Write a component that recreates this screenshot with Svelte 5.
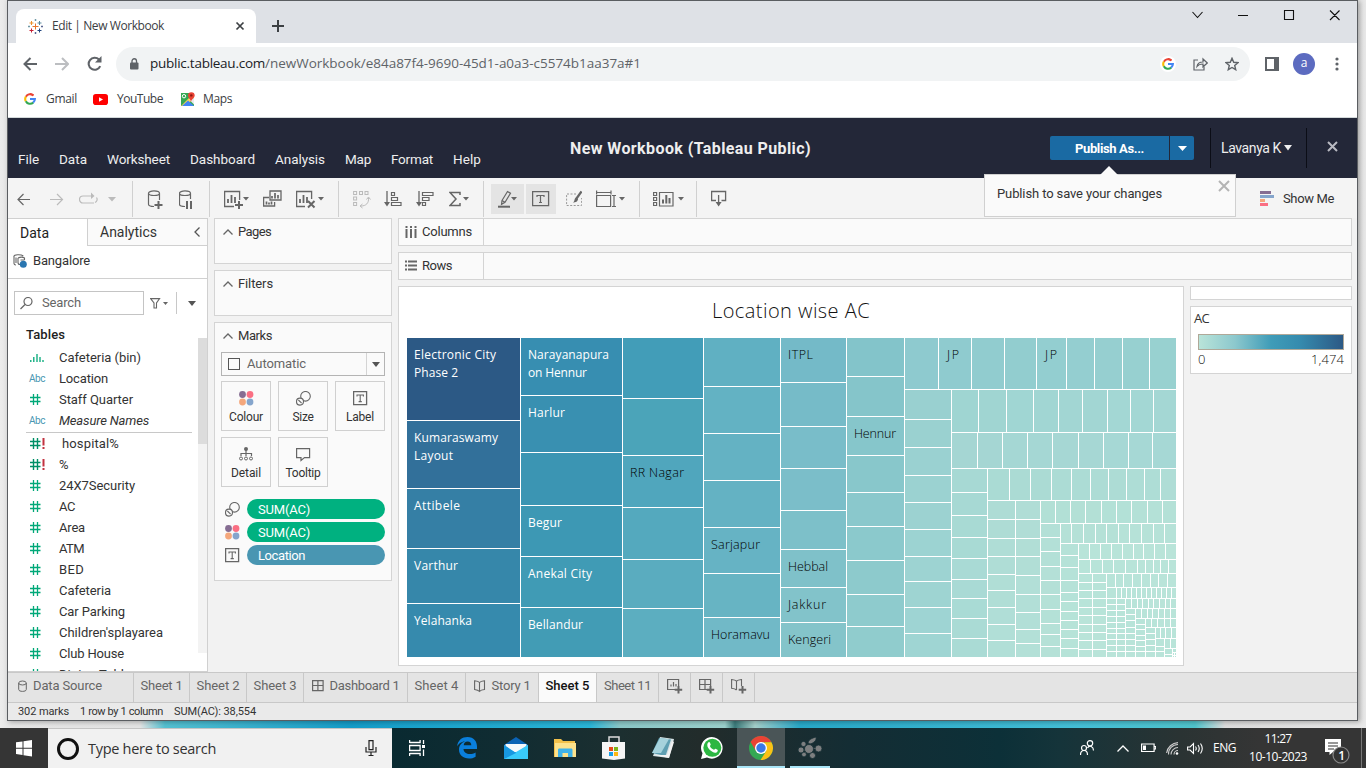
<script>
  // Spreads letters so that a label takes exactly the given width in pixels.
  function fit(node, width) {
    const natural = node.getBoundingClientRect().width;
    const n = node.textContent.length;
    if (natural && n) node.style.letterSpacing = ((width - natural) / n).toFixed(3) + 'px';
  }

  const G = '#666';
  const caret = (x, y = 8) => `<path d="M${x} ${y}h6l-3 3.5z" fill="${G}"/>`;
  const bars = (x, y) => `<path d="M${x} ${y + 4}v4M${x + 3.5} ${y}v8M${x + 7} ${y + 2}v6" stroke="${G}" stroke-width="1.8" fill="none"/>`;
  const s = (d, w = 1.3, c = G) => `<path d="${d}" stroke="${c}" stroke-width="${w}" fill="none"/>`;
  const google = `<path d="M6 1.1a4.9 4.9 0 0 1 3.4 1.3" stroke="#ea4335" stroke-width="2" fill="none"/><path d="M1.9 3.7A4.8 4.8 0 0 1 9.3 2.5" stroke="#ea4335" stroke-width="2.1" fill="none"/><path d="M1.8 8.3a4.8 4.8 0 0 1 .1-4.7" stroke="#fbbc05" stroke-width="2.1" fill="none"/><path d="M9.2 9.6A4.8 4.8 0 0 1 1.8 8.2" stroke="#34a853" stroke-width="2.1" fill="none"/><path d="M6 6h4.9a4.8 4.8 0 0 1-1.8 3.6" stroke="#4285f4" stroke-width="2.1" fill="none"/>`;
  const dots4 = `<circle cx="3.5" cy="3.5" r="3.4" fill="#866d92"/><circle cx="11" cy="3.5" r="3.4" fill="#fa6f83"/><circle cx="3.5" cy="11" r="3.4" fill="#f4a77c"/><circle cx="11" cy="11" r="3.4" fill="#85a5cc"/>`;
  const sizeIcon = `<circle cx="9.5" cy="5.3" r="4.8" stroke="${G}" stroke-width="1.1" fill="#fafafa"/><circle cx="4" cy="10.6" r="3.5" stroke="${G}" stroke-width="1.1" fill="#fafafa"/>` + s('M2.4 9l3.2 3.2', 1.1);
  const tbox = s('M.6 .6h13v13H.6z') + s('M4 5.5V4h6.4v1.5M7.2 4v6.6M5.6 10.6h3.2', 1.1);

  const I = {
    google,
    logo: ['7.5 4.5v6|M4.5 7.5h6|#e8762c', '7.5 0v2|M6.5 1h2|#7099a6', '7.5 13v2|M6.5 14h2|#5b6591', '1 6.5v2|M0 7.5h2|#7099a6', '14 6.5v2|M13 7.5h2|#5b6591', '3.5 2v4|M1.500 4h4|#eb912c', '11.5 2v4|M9.500 4h4|#59879b', '3.5 9.5v4|M1.500 11.500h4|#c72035', '11.500 9.5v4|M9.500 11.500h4|#1f447e'].map((t) => { const p = t.split('|'); return s('M' + p[0] + p[1], 1, p[2]); }).join(''),
    youtube: `<rect y="1" width="15" height="11" rx="2.8" fill="red"/><path d="M6 4.2v4.6l4-2.3z" fill="#fff"/>`,
    maps: `<path d="M1 1h10l3 4v9H1z" fill="#34a853"/><path d="M1 14L12 3l2 2v1L6 14z" fill="#fbd34d"/><path d="M2 14l6-5.5 6 5.5z" fill="#4285f4"/><path d="M9 7.5l5 5V6z" fill="#e8eaed"/><circle cx="4" cy="4.2" r="1.7" stroke="#fff" fill="none"/><path d="M11 10C10.500 7 8 6 8 3.600a3.300 3.300 0 0 1 6.700 0C14.700 6 11.500 7 11 10z" fill="#ea4335"/><circle cx="11.300" cy="3.400" r="1.200" fill="#8c1a11"/>`,
    cBack: s('M14 8H1.500M7.500 2L1.500 8l6 6', 2, '#5f6368'),
    cFwd: s('M0 8h12.500M7 2l6 6-6 6', 2, '#bcbec1'),
    reload: s('M13.200 10.200A6 6 0 1 1 12 3.600', 2.1, '#5f6368') + `<path d="M14.500 0v6.500H8z" fill="#5f6368"/>`,
    lock: `<rect y="4.500" width="8.500" height="7" rx="1" fill="#5f6368"/>` + s('M2 5V3a2.250 2.250 0 0 1 4.500 0v2', 1.3, '#5f6368'),
    share: s('M5 3H1v10h10V9.500', 1.2, '#5f6368') + s('M4 9.500c.5-3.500 3-4.500 6-4.500V2l4.300 4L10 9.800V7C7 7 5.500 7.600 4 9.500z', 1.2, '#5f6368'),
    star: s('M7 1.300l1.700 4 4.300.4-3.300 2.800 1 4.200L7 10.500l-3.700 2.200 1-4.200L1 5.700l4.300-.4z', 1.4, '#5f6368'),
    panel: s('M1 1h12v12H1z', 2, '#5f6368') + `<path d="M9 1h5v12H9z" fill="#5f6368"/>`,
    kebab: `<g fill="#5f6368"><circle cx="2" cy="2" r="1.600"/><circle cx="2" cy="7" r="1.600"/><circle cx="2" cy="12" r="1.600"/></g>`,
    back: s('M13 10.500H1M6.500 5L1 10.500 6.500 16', 1.2),
    fwd: s('M0 10.500h12M7 5l5.500 5.500L7 16', 1.2, '#bbb'),
    loop: s('M15 14H4a3.500 3.500 0 0 1 0-7h10M16 13.500a3.300 3.300 0 0 0 1.500-5', 1.2, '#bbb') + `<path d="M12 3.500L15.500 7 12 10z" fill="#bbb"/>`,
    gcaret: `<path d="M0 8h8l-4 4.500z" fill="#bbb"/>`,
    dbPlus: s('M7 17.500c-3 0-5.500-.8-5.500-2.200V4.500M12.500 4.500V11', 1.2) + `<ellipse cx="7" cy="4.200" rx="5.500" ry="2.300" stroke="${G}" fill="none" stroke-width="1.200"/>` + s('M11.500 12v8M7.500 16h8', 2),
    dbPause: s('M6 17.500c-3 0-5.500-.8-5.500-2.200V4.500M11.500 4.500V10', 1.2) + `<ellipse cx="6" cy="4.200" rx="5.500" ry="2.300" stroke="${G}" fill="none" stroke-width="1.200"/>` + s('M8 12v8M12 12v8', 2),
    newSheet: s('M10 17.500H.6V2.500h15V11') + bars(4, 6) + s('M15 12v8M11 16h8', 2) + caret(19),
    dup: s('M7 2h11v9H7z') + s('M6 8.500H.6V17h11v-4') + `<path d="M9 9.500V7M12 9.500V4M15 9.500V6M3.500 15.500v-3M6 15.500v-2M8.500 15.500v-3" stroke="${G}" stroke-width="1.700"/>`,
    clear: s('M9 17.500H.6V2.500h15V10') + bars(4, 6) + s('M12 12l6.500 6.500M18.500 12L12 18.500', 2) + caret(22),
    swap: `<g stroke="#bbb" fill="none"><rect x=".6" y="2.500" width="3" height="3"/><rect x="6.500" y="2.500" width="3" height="3"/><rect x="12" y="2.500" width="3" height="3"/><rect x=".6" y="8" width="3" height="3"/><rect x=".6" y="13.500" width="3" height="3"/><path d="M8 17c5 0 8-3 7.500-8"/><path d="M13.500 10.500L15.500 8l2 2.500M9.500 15L7 17l2.500 2"/></g>`,
    asc: s('M3 2v14') + `<path d="M0 13h6l-3 4.500z" fill="${G}"/>` + s('M7.500 3.500h3v3h-3zM7.500 8.500h6v3h-6zM7.500 13.500h9.500v3H7.500z', 1.2),
    desc: s('M3 2v14') + `<path d="M0 13h6l-3 4.500z" fill="${G}"/>` + s('M6.500 3.500h10.500v3H6.500zM6.500 8.500h6.500v3H6.500zM6.500 13.500h3v3h-3z', 1.2),
    sigma: s('M11 6V3.500H1L7 10l-6 6.500h10V14', 1.5) + caret(14),
    pencil: s('M4 11.500L9.500 2.500l3 1.800L7 13.300l-3.500 2z M4 11.500l3 1.800', 1.2) + s('M0 17.700h12', 2) + caret(13),
    tlabel: s('M.6 2.600h16v14H.6z', 1.3) + s('M5 8V6.500h7V8M8.500 6.500v7M7 13.500h3', 1.2),
    brush: s('M10 5H.6v11.500h15V9', 1, '#999').replace('<path', '<path stroke-dasharray="2 1.500"') + s('M15.500 2.500l-5 7', 2.2) + `<path d="M10 8.500l2 1.500c0 2.500-2.500 3.500-5 3.500 2-1 1-4 3-5z" fill="${G}"/>`,
    fitv: s('M.6 1.500v4M15 1.500v4M.6 3.500H15M.6 6.500h14v11H.6zM16 6.500h4M16 17.500h4M18 6.500v11', 1.2) + caret(23),
    cards: s('M.6 3.500h3v3h-3zM.6 8.500h3v3h-3zM.6 13.500h3v3h-3zM6.500 3.500H20v13.500H6.500z', 1.2) + `<path d="M10 14.500v-4M13.300 14.500V6M16.500 14.500V9" stroke="${G}" stroke-width="2"/>` + caret(25),
    present: s('M5 11.500H.6V2.500h14v9H10.500M7.600 6v9', 1.3) + `<path d="M4.600 13h6l-3 4.500z" fill="${G}"/>`,
    showme: `<path d="M0 1h11v3H0z" fill="#866d92"/><path d="M0 5h14v3H0z" fill="#85a5cc"/><path d="M0 9h5v3H0z" fill="#f4a77c"/><path d="M0 13h8v3H0z" fill="#fa6f83"/>`,
    up: s('M.5 5.500L5 1l4.500 4.500', 1.3),
    left: s('M5.500 .5L1 5l4.500 4.500', 1.3, '#555'),
    source: s('M1 2.500v7c0 1 1 1.500 2 1.500M.8 2.500c0-2 7-2.500 9.500-.5M5 4v4.500c0 1 1 2 2 2M3 3.500v5.500M5 4c2-1 5-1 6.500 0v2M7.500 6h4', 1.1) + `<circle cx="10.300" cy="10.300" r="3.500" fill="#2a76b0"/>`,
    search: `<circle cx="8" cy="4.500" r="4" stroke="${G}" fill="none" stroke-width="1.200"/>` + s('M5 7.500L.5 12', 1.3),
    filter: s('M.6 .6h9L6.500 5v5h-2.500V5z', 1.1) + `<path d="M13 4h5l-2.500 3z" fill="${G}"/>`,
    hash: s('M0 3.500h10.500M0 7.500h10.500M3.500 0v11M7.500 0v11', 1.3, '#00a878'),
    hashBang: s('M0 3.500h10.500M0 7.500h10.500M3.500 0v11M7.500 0v11', 1.4, '#008f66') + s('M13.500 0v7.500M13.500 9v2', 2, '#c23340'),
    bin: s('M.8 8v2M3.800 5v5M7 2v8M10 5v5M13 8v2', 1.3, '#00a878'),
    dots4, sizeIcon, tbox,
    detail: `<circle cx="7" cy="2" r="2" fill="${G}"/>` + s('M7 3v4M2 9V6.500h10.500V9M7 6v3', 1.2) + `<g stroke="${G}" fill="none"><circle cx="2" cy="11.500" r="1.500"/><circle cx="7" cy="11.500" r="1.500"/><circle cx="12" cy="11.500" r="1.500"/></g>`,
    tip: s('M.6 1.600h13v9H8.500L5 13.500V10.600H.6z', 1.2),
    cols: `<path d="M1.500 0v2M6 0v2M10.500 0v2M1.500 3v9M6 3v9M10.500 3v9" stroke="${G}" stroke-width="2"/>`,
    rows: `<path d="M0 1.500h2M0 5.500h2M0 9.500h2M3 1.500h9M3 5.500h9M3 9.500h9" stroke="${G}" stroke-width="2"/>`,
    cyl: `<ellipse cx="4.500" cy="3" rx="3.800" ry="2" stroke="${G}" fill="none"/>` + s('M.7 3v6.500c0 2.500 7.600 2.500 7.600 0V3', 1),
    dash: s('M.6 .6h10.500v10H.6zM5.900 .6v10M.6 5.500h10.500', 1.2),
    story: s('M5.500 2.500v9M.6 .8c2 .2 4 .6 4.900 1.700C6.500 1.400 8.500 1 10.500 .8v8.700c-2 .2-4 .8-5 2-1-1.200-3-1.800-4.900-2z', 1.1),
    tSheet: s('M8 11.500H.6V1.500h11V8', 1.2) + s('M4 8.500V6.500M6.500 8.500V4M9 8.500V6', 1.2) + s('M11.500 8v7.500M7.700 11.700h7.500', 2),
    tDash: s('M8 11.500H.6V1.500h11V8M6 1.500v10M.6 6.500h11', 1.2) + s('M11.500 8v7.500M7.700 11.700h7.500', 2),
    tStory: s('M5.500 3v9M5.500 12c-1-1-3-1.500-4.900-1.700V1.500c2 .2 4 .6 4.900 1.700 1-1.100 3-1.500 5-1.700V8', 1.1) + s('M11.500 8v7.500M7.700 11.700h7.500', 2),
    win: `<path d="M0 2.300L6.500 1.400v6.300H0zM7.500 1.200L16 0v7.700H7.500zM0 8.700h6.500V15L0 14.100zM7.500 8.700H16v7.700L7.500 15.200z" fill="#fff"/>`,
    mic: s('M4 .6h4v9H4zM1 7v5h10V7M6 12v4M3.500 15.500h5', 1.2, '#222'),
    task: s('M.6 0v3M.6 13v3M.6 2.500h10.500V0M.6 13.500h10.500V16M.6 5.500h10.500v5H.6zM14.500 0v4M14.500 9.500V16', 1.3, '#fff') + `<path d="M13 5h3v3h-3z" fill="#fff"/>`,
    edge: `<path d="M0 9.500C1 3 5 0 10.500 0 17 0 20 4.500 20 9.500V12H6.500c.2 3.500 3 5 6.300 5 2.200 0 4-.5 5.800-1.500v4.200C16.500 21 14.500 21.500 12 21.500c-6 0-10-3.500-10-9 0-4 2.500-7 6-8C4 4.500 1.500 7 0 9.500zM6.700 8.300h7.600c0-2.300-1.200-3.800-3.700-3.800-2.400 0-3.700 1.700-3.900 3.800z" fill="#0a7fdc"/>`,
    mail: `<path d="M0 8l12-8 12 8v14H0z" fill="#0b63b5"/><path d="M1.500 7h21v8h-21z" fill="#f4f8fb"/><path d="M0 8l12 8 12-8v14H0z" fill="#27b1f0"/><path d="M0 22L24 8v14z" fill="#39cafa"/><path d="M0 22V8l12 8z" fill="#1897e0"/>`,
    folder: `<path d="M0 1h7l2 2h12v16H0z" fill="#f3c14b"/><path d="M1 5h21v14H1z" fill="#fde28c"/><path d="M4 19v-7c0-1 .5-1.500 1.500-1.500H17c1 0 1.500.5 1.500 1.500v7H14v-4H8.500v4z" fill="#3fb2ea"/>`,
    store: s('M7 7V1h10v6', 1.5, '#ddd') + `<path d="M0 6h23v16.500L12 24 0 22.500z" fill="#f5f5f5"/><path d="M7 11h4v4H7z" fill="#e64a19"/><path d="M12 11h4v4h-4z" fill="#7cb518"/><path d="M7 16h4v4H7z" fill="#18a0e8"/><path d="M12 16h4v4h-4z" fill="#fdb813"/>`,
    note: `<path d="M8 0l14 2-5 19-16-2z" fill="#d7e3e6"/><path d="M7 1L19 2.500 13.500 19 0 16z" fill="#5f9fb2"/><path d="M8 1l9 1-8 14-9 0z" fill="#a6d2dc"/><path d="M20 4l2 1-5 16-14-3 12 0z" fill="#f2f2f2"/>`,
    wa: `<path d="M0 22l1.500-5.700A10.800 10.800 0 1 1 6 20.500z" fill="#fff"/><circle cx="11.300" cy="10.800" r="9" fill="#2cb742"/><path d="M7.300 5.500c.8-.7 1.400-.5 1.700.3l.7 1.700c.2.600-.8 1.200-.8 1.600.6 1.700 2 3 4 3.700.6 0 1-1.300 1.600-1.100l2 1c.8.500-.2 2.300-1 2.700-2 .8-4-.2-6-1.800-2-1.700-3.300-3.800-3.200-5.600 0-1.100.4-2 1-2.500z" fill="#fff"/>`,
    chrome: `<circle cx="12" cy="12" r="12" fill="#34a853"/><path d="M1.600 6A12 12 0 0 1 22.400 6L12 6.500 7 15z" fill="#ea4335"/><path d="M22.400 6.200A12 12 0 0 1 11.500 24l5.700-9-2-8.800z" fill="#fbc116"/><circle cx="12" cy="12" r="6" fill="#fff"/><circle cx="12" cy="12" r="4.700" fill="#3b78e7"/>`,
    molecule: s('M5 7l6 5 9-1M3 13h8M6 17l5-5 3 7', 1, '#7d7f80') + `<g fill="#7d7f80" stroke="#142d34" stroke-width=".8"><circle cx="11" cy="12" r="4.500"/><circle cx="3" cy="13" r="3"/><circle cx="20.500" cy="11.500" r="3.500"/><circle cx="5.500" cy="7" r="2.600"/><circle cx="6" cy="17.500" r="2.400"/><circle cx="14.500" cy="18.500" r="3"/><path d="M10 6c0-3 4-5 8-6 1 3-2 6-6 7z"/></g>`,
    people: `<circle cx="10" cy="3.300" r="2.700" stroke="#fff" fill="none" stroke-width="1.200"/><circle cx="4" cy="8" r="2.500" stroke="#fff" fill="none" stroke-width="1.200"/>` + s('M.5 15c0-6 7-6 7 0M7.500 8c2-3.500 6-1.500 6 2.500', 1.2, '#fff'),
    chev: s('M.5 6.500L6 1l5.500 5.500', 1.3, '#fff'),
    batt: s('M.6 1h12.500v7.500H.6zM13.500 3.500h1.200v2.500h-1.200', 1.2, '#fff') + `<path d="M2 2.500h3V7H2z" fill="#fff"/>`,
    wifi: s('M8 12.500A4 4 0 0 1 12 8.500M5 12.500A7 7 0 0 1 12 5.500M2.500 12.500A9.500 9.500 0 0 1 12 2.500M.6 11A12 12 0 0 1 12 .6', 1.1, '#ccc') + `<circle cx="11" cy="11.500" r="1.300" fill="#fff"/>`,
    sound: s('M.6 5h2.500L6.500 1.500v10L3.100 8H.6zM8.500 4.500q1.500 2 0 4M11 3q2.500 3.500 0 7M13.500 1.500q3.500 5 0 10', 1.1, '#fff'),
    notif: `<path d="M0 0h16v13H8l-3.500 3v-3H0z" fill="#fff"/>` + s('M3 4h10M3 7h10M3 10h6', 1.1, '#333') + `<circle cx="16" cy="16" r="8" fill="#333" stroke="#888" stroke-width="1.200"/>`,
  };

  // [icon, width, gap before, kind]
  const tools = [
    ['back', 14, 9], ['fwd', 14, 19], ['loop', 19, 15], ['gcaret', 8, 10], ['sep', 1, 16],
    ['dbPlus', 16, 14], ['dbPause', 14, 16], ['sep', 1, 16],
    ['newSheet', 25, 14], ['dup', 19, 14], ['clear', 28, 14], ['sep', 1, 14],
    ['swap', 19, 14], ['asc', 18, 12], ['desc', 18, 14], ['sigma', 20, 15], ['sep', 1, 14],
    ['pencil', 33, 7, 'on'], ['tlabel', 30, 2, 'on'],
    ['brush', 16, 10], ['fitv', 29, 14], ['sep', 1, 14], ['cards', 31, 13], ['sep', 1, 12], ['present', 16, 14],
  ];
  const menu = [['File', 21], ['Data', 28], ['Worksheet', 63], ['Dashboard', 65], ['Analysis', 50], ['Map', 26], ['Format', 42], ['Help', 28]];
  const dims = [['bin', 'Cafeteria (bin)', 82], ['abc', 'Location', 49], ['hash', 'Staff Quarter', 74], ['abc', 'Measure Names', 90, 'it']];
  const meas = [['hashBang', 'hospital%', 57, 'ind'], ['hashBang', '%', 12], ['hash', '24X7Security', 76], ['hash', 'AC', 16], ['hash', 'Area', 26], ['hash', 'ATM', 25], ['hash', 'BED', 25], ['hash', 'Cafeteria', 52], ['hash', 'Car Parking', 66], ["hash", "Children'splayarea", 104], ['hash', 'Club House', 65], ['hash', 'Dining Table', 72]];
  const markBtns = [['dots4', 'Colour', 34], ['sizeIcon', 'Size', 21], ['tbox', 'Label', 28], ['detail', 'Detail', 30], ['tip', 'Tooltip', 35]];
  const pills = [['sizeIcon', 'SUM(AC)', 52, '#00b180'], ['dots4', 'SUM(AC)', 52, '#00b180'], ['tbox', 'Location', 47, '#4996b2']];
  // [label, text width, cell width, icon, icon width]
  const sheets = [
    ['Data Source', 69, 125, 'cyl', 9], ['Sheet 1', 42, 55], ['Sheet 2', 43, 56], ['Sheet 3', 43, 56], ['Dashboard 1', 70, 103, 'dash', 12],
    ['Sheet 4', 44, 57], ['Story 1', 39, 72, 'story', 12], ['Sheet 5', 44, 57], ['Sheet 11', 47, 61],
  ];
  const apps = [['task', 16, 16], ['edge', 20, 22], ['mail', 24, 22], ['folder', 22, 20], ['store', 23, 24], ['note', 22, 22], ['wa', 22, 22], ['chrome', 24, 24], ['molecule', 24, 22]];

  // Treemap strips: direction, x, y, far edge, divider positions, first and last fill.
  const R = 1176, B = 657;
  const strips = [
    ['c', 407, 338, 520, [420, 488, 548, 603], ['#2c5985', '#32709a', '#357fa5', '#3687aa', '#368aad']],
    ['c', 521, 338, 622, [395, 452, 505, 556, 607], ['#378eb1', '#3990b1', '#3b95b3', '#3d98b4', '#409bb5', '#429cb5']],
    ['c', 623, 338, 703, [398, 455, 507, 559, 608], ['#429db8', '#4ba4b9', '#50a6bd', '#54a9be', '#5aacbf', '#5caec0']],
    ['c', 704, 338, 780, [386, 433, 480, 527, 573, 617], ['#60b0c2', '#63b2c3', '#64b2c3', '#64b2c3', '#66b3c4', '#67b4c3', '#71b9c7']],
    ['c', 781, 338, 846, [382, 426, 468, 510, 549, 587, 622], ['#74bac8', '#84c4ca']],
    ['c', 847, 338, 904, [376, 416, 455, 492, 526, 560, 594, 626], ['#83c4ca', '#90cccd']],
    ['r', 905, 338, 389, [938, 971, 1004, 1036, 1066, 1094, 1122, 1149], ['#8ecacf', '#98d1d0']],
    ['c', 905, 390, 951, [419, 447, 475, 502, 529, 556, 581, 607, 633], ['#99d0d0', '#9fd5d3']],
    ['r', 952, 390, 432, [978, 1006, 1033, 1058, 1082, 1107, 1130, 1153], ['#9fd5d2', '#a4d7d4']],
    ['r', 952, 433, 468, [977, 1002, 1027, 1052, 1078, 1103, 1128, 1152], ['#a5d6d3', '#a6d8d5']],
    ['c', 952, 469, 987, [492, 515, 537, 558, 579, 598, 618, 638], ['#a7d9d4', '#aadbd5']],
    ['r', 988, 469, 500, [1009, 1030, 1051, 1071, 1090, 1108, 1126, 1144, 1160], ['#aadbd4', '#afddd6']],
    ['c', 988, 501, 1015, [519, 538, 556, 574, 590, 607, 624, 640], ['#aedcd5', '#b1dfd7']],
    ['c', 1016, 501, 1040, [519, 538, 556, 575, 594, 612, 629, 643], ['#b0ddd6', '#b3e0d7']],
    ['r', 1041, 501, 523, [1055, 1070, 1085, 1101, 1116, 1131, 1147, 1162], ['#b2e0d6', '#b4e1d7']],
    ['c', 1041, 524, 1060, [537, 551, 566, 580, 594, 609, 623, 634, 646], ['#b3e0d7', '#b5e1d7']],
    ['r', 1061, 524, 543, [1071, 1083, 1095, 1106, 1118, 1129, 1141, 1153, 1164], ['#b5e1d7', '#b6e2d8']],
    ['c', 1061, 544, 1078, [555, 567, 580, 592, 601, 611, 620, 629, 638, 648], ['#b5e2d8', '#b6e3d8']],
    ['r', 1079, 544, 559, [1089, 1100, 1111, 1122, 1133, 1143, 1154, 1165]],
    ['r', 1079, 560, 573, [1090, 1102, 1113, 1125, 1137, 1145, 1153, 1160, 1168]],
    ['c', 1079, 574, 1092, [582, 590, 598, 607, 615, 624, 632, 640, 649]],
    ['c', 1093, 574, 1106, [582, 590, 598, 607, 615, 624, 632, 640, 649]],
    ['r', 1107, 574, 587, [1115, 1123, 1132, 1141, 1150, 1158, 1167]],
    ['r', 1107, 588, 598, [1116, 1121, 1126, 1131, 1136, 1141, 1146, 1151, 1156, 1161, 1166, 1171]],
    ['c', 1107, 599, 1116, [604, 610, 616, 622, 628, 633, 639, 645, 651]],
    ['c', 1117, 599, 1125, [604, 610, 616, 622, 628, 633, 639, 645, 651]],
    ['r', 1126, 599, 608, [1131, 1137, 1142, 1148, 1153, 1159, 1165, 1170]],
    ['c', 1126, 609, 1135, [614, 620, 627, 633, 639, 645, 651]],
    ['r', 1136, 609, 618, [1141, 1147, 1152, 1158, 1164, 1170]],
    ['c', 1136, 619, 1145, [624, 629, 635, 640, 646, 651]],
    ['r', 1146, 619, 627, [1151, 1157, 1164, 1170]],
    ['c', 1146, 628, 1155, [633, 639, 645, 651]],
    ['r', 1156, 628, 638, [1160, 1165, 1171]],
    ['c', 1156, 639, 1164, [646, 651]],
    ['r', 1165, 639, 648, [1170]],
    ['c', 1165, 649, 1172, [654]],
    ['r', 1173, 649, 652, []],
    ['c', 1173, 653, 1174, [655]],
    ['c', 1175, 653, R, [655]],
  ];
  const hex = (c) => [1, 3, 5].map((i) => parseInt(c.slice(i, i + 2), 16));
  const mix = (a, b, t) => { const x = hex(a), y = hex(b); return 'rgb(' + x.map((v, i) => Math.round(v + (y[i] - v) * t)) + ')'; };
  const cells = strips.flatMap(([dir, x, y, far, cuts, fills = ['#b8e4d9', '#b9e4d9']]) => {
    const ends = [...cuts, dir === 'c' ? B : R];
    let start = dir === 'c' ? y : x;
    return ends.map((e, i) => {
      const fill = fills.length > 2 ? fills[i] : mix(fills[0], fills[1], i / Math.max(1, ends.length - 1));
      const r = dir === 'c' ? { x, y: start, w: far - x, h: e - start, fill } : { x: start, y, w: e - start, h: far - y, fill };
      start = e + 1;
      return r;
    });
  });
  const labels = [
    ['Electronic City', 414, 359, 82, 1], ['Phase 2', 414, 377, 44, 1], ['Kumaraswamy', 414, 442, 84, 1], ['Layout', 414, 460, 39, 1], ['Attibele', 414, 510, 46, 1],
    ['Varthur', 414, 570, 44, 1], ['Yelahanka', 414, 625, 58, 1], ['Narayanapura', 528, 359, 81, 1], ['on Hennur', 528, 377, 59, 1], ['Harlur', 528, 417, 37, 1],
    ['Begur', 528, 527, 34, 1], ['Anekal City', 528, 578, 64, 1], ['Bellandur', 528, 629, 55, 1], ['RR Nagar', 630, 477, 54], ['Sarjapur', 711, 549, 49], ['Horamavu', 711, 639, 59],
    ['ITPL', 788, 359, 25], ['Hebbal', 788, 571, 40], ['Jakkur', 788, 609, 38], ['Kengeri', 788, 644, 43], ['Hennur', 854, 438, 42], ['JP', 947, 359, 12], ['JP', 1045, 359, 12],
  ];
</script>

{#snippet ic(name, w, h, cls = '')}
  <svg class={cls} width={w} height={h} viewBox="0 0 {w} {h}">{@html I[name]}</svg>
{/snippet}

<div class="desktop">
  <div class="window">
    <div class="tabstrip">
      <div class="tab">
        {@render ic('logo', 15, 15)}
        <span class="seg tabname" use:fit={112}>Edit | New Workbook</span>
        <svg class="tabx" width="10" height="10"><path d="M1.500 1.500l7 7M8.500 1.500l-7 7" stroke="#3c4043" stroke-width="1.700" /></svg>
      </div>
      <svg class="plus" width="12" height="12"><path d="M6 0v12M0 6h12" stroke="#3c4043" stroke-width="2" /></svg>
      <svg class="winbtns" width="150" height="12" viewBox="0 0 150 12">
        <path d="M.5 3l5 5.500 5-5.500M46 6.500h10M92.500 1.500h9v9h-9zM138 1.500l9.500 9.500M147.500 1.500L138 11" stroke="#111" stroke-width="1.100" fill="none" />
      </svg>
    </div>
    <div class="nav">
      {@render ic('cBack', 14, 16)}
      {@render ic('cFwd', 14, 16, 'nf')}
      {@render ic('reload', 15, 15, 'nr')}
      <div class="omni">
        {@render ic('lock', 9, 12)}
        <span class="seg url"><b use:fit={115}>public.tableau.com</b><i use:fit={376}>/newWorkbook/e84a87f4-9690-45d1-a0a3-c5574b1aa37a#1</i></span>
        <span class="gbub">{@render ic('google', 12, 12)}</span>
        {@render ic('share', 15, 14, 'osh')}
        {@render ic('star', 14, 14, 'ost')}
      </div>
      {@render ic('panel', 14, 14, 'npan')}
      <span class="avatar seg">a</span>
      {@render ic('kebab', 4, 14, 'nkeb')}
    </div>
    <div class="bookmarks seg">
      {@render ic('google', 12, 12)}<span class="bm1" use:fit={31}>Gmail</span>
      {@render ic('youtube', 15, 13, 'by')}<span class="bm2" use:fit={46}>YouTube</span>
      {@render ic('maps', 15, 15, 'bmap')}<span class="bm3" use:fit={29}>Maps</span>
    </div>

    <header>
      <nav>{#each menu as [m, w]}<span use:fit={w}>{m}</span>{/each}</nav>
      <h1><span use:fit={241}>New Workbook (Tableau Public)</span></h1>
      <div class="publish"><button><span use:fit={69}>Publish As...</span></button><button class="drop"><svg width="9" height="5"><path d="M0 0h9L4.500 5z" fill="#fff" /></svg></button></div>
      <div class="user"><span use:fit={60}>Lavanya K</span><svg width="8" height="6"><path d="M0 0h8L4 5.500z" fill="#eee" /></svg></div>
      <svg class="hx" width="11" height="11"><path d="M1 1l9 9M10 1l-9 9" stroke="#b9bac2" stroke-width="2" /></svg>
      <div class="bubble">
        <svg class="tipup" width="18" height="10"><path d="M0 10L9 1l9 9z" fill="#fafafa" /></svg>
        <span use:fit={165}>Publish to save your changes</span>
        <svg class="bx" width="12" height="12"><path d="M1 1l10 10M11 1L1 11" stroke="#b4b4b4" stroke-width="2" /></svg>
      </div>
    </header>

    <div class="toolbar">
      {#each tools as [name, w, gap, on]}
        {#if name === 'sep'}
          <i class="sep" style="margin-left:{gap}px"></i>
        {:else if on}
          <span class="on" style="width:{w}px;margin-left:{gap}px">{@render ic(name, name === 'pencil' ? 20 : 18, 20)}</span>
        {:else}
          <span class="tool" style="width:{w}px;margin-left:{gap}px">{@render ic(name, w, 20)}</span>
        {/if}
      {/each}
      <span class="showme">{@render ic('showme', 14, 17)}<span use:fit={51}>Show Me</span></span>
    </div>

    <div class="main">
      <aside>
        <div class="ptabs">
          <div class="pt active"><span use:fit={29}>Data</span></div>
          <div class="pt an"><span use:fit={57}>Analytics</span>{@render ic('left', 6, 10)}</div>
        </div>
        <div class="ds">{@render ic('source', 14, 14)}<span use:fit={57}>Bangalore</span></div>
        <div class="find">
          <div class="sbox">{@render ic('search', 13, 13)}<span use:fit={39}>Search</span></div>
          {@render ic('filter', 18, 11)}
          <i></i>
          <svg width="8" height="5"><path d="M0 0h8L4 5z" fill="#555" /></svg>
        </div>
        <div class="tables"><span use:fit={39}>Tables</span></div>
        <div class="fields">
          <div class="list">
            {#each dims as [icon, t, w, cls]}
              <div class="field {cls ?? ''}"><span class="fi">{#if icon === 'abc'}<em class="abc" use:fit={16}>Abc</em>{:else}{@render ic(icon, 15, 11)}{/if}</span><span use:fit={w}>{t}</span></div>
            {/each}
            <hr />
            {#each meas as [icon, t, w, cls]}
              <div class="field {cls ?? ''}"><span class="fi">{@render ic(icon, 15, 11)}</span><span use:fit={w}>{t}</span></div>
            {/each}
          </div>
          <div class="scroll"><div class="thumb"></div></div>
        </div>
      </aside>

      <div class="shelves">
        <section class="card sm"><h2>{@render ic('up', 10, 6)}<span use:fit={33}>Pages</span></h2></section>
        <section class="card sm"><h2>{@render ic('up', 10, 6)}<span use:fit={35}>Filters</span></h2></section>
        <section class="card marks">
          <h2>{@render ic('up', 10, 6)}<span use:fit={34}>Marks</span></h2>
          <div class="select"><i></i><span use:fit={59}>Automatic</span><b><svg width="8" height="5"><path d="M0 0h8L4 5z" fill="#555" /></svg></b></div>
          <div class="mgrid">
            {#each markBtns as [icon, t, w]}
              <div class="mbtn">{@render ic(icon, 15, 15)}<span use:fit={w}>{t}</span></div>
            {/each}
          </div>
          <div class="pills">
            {#each pills as [icon, t, w, c]}
              <div class="prow">{@render ic(icon, 15, 15)}<div class="pill" style="background:{c}"><span use:fit={w}>{t}</span></div></div>
            {/each}
          </div>
        </section>
      </div>

      <div class="canvas">
        <div class="shelf"><div class="sh">{@render ic('cols', 12, 12)}<span use:fit={50}>Columns</span></div></div>
        <div class="shelf"><div class="sh">{@render ic('rows', 12, 12)}<span use:fit={30}>Rows</span></div></div>
        <div class="vrow">
          <div class="view">
            <div class="vtitle"><span use:fit={158}>Location wise AC</span></div>
            <svg class="tree" width="769" height="319" viewBox="407 338 769 319">
              {#each cells as c}<rect x={c.x} y={c.y} width={c.w} height={c.h} fill={c.fill} />{/each}
              {#each labels as [t, x, y, w, light]}
                <text {x} {y} textLength={w} class={light ? 'lt' : 'dk'}>{t}</text>
              {/each}
            </svg>
          </div>
          <div class="side">
            <div class="blank"></div>
            <div class="legend">
              <span use:fit={15}>AC</span>
              <div class="ramp"></div>
              <div class="range"><span use:fit={7}>0</span><span use:fit={33}>1,474</span></div>
            </div>
          </div>
        </div>
      </div>
    </div>

    <div class="sheets">
      {#each sheets as [t, tw, w, icon, iw]}
        <div class="st" class:cur={t === 'Sheet 5'} class:src={t === 'Data Source'} style="width:{w}px">
          {#if icon}{@render ic(icon, iw, 13)}{/if}<span use:fit={tw}>{t}</span>
        </div>
      {/each}
      {#each ['tSheet', 'tDash', 'tStory'] as n}<div class="st add">{@render ic(n, 16, 16)}</div>{/each}
    </div>
    <div class="status"><span use:fit={51}>302 marks</span><span use:fit={83}>1 row by 1 column</span><span use:fit={82}>SUM(AC): 38,554</span></div>
  </div>

  <footer class="seg">
    <div class="start">{@render ic('win', 16, 17)}</div>
    <div class="cortana"><span class="ring"></span><span use:fit={128}>Type here to search</span>{@render ic('mic', 12, 17)}</div>
    {#each apps as [n, w, h]}
      <div class="app" class:front={n === 'chrome'} class:open={n === 'molecule'}>{@render ic(n, w, h)}</div>
    {/each}
    <div class="tray">
      {@render ic('people', 15, 16)}
      {@render ic('chev', 12, 7, 't1')}
      {@render ic('batt', 15, 10, 't2')}
      {@render ic('wifi', 13, 13, 't3')}
      {@render ic('sound', 17, 13, 't4')}
      <span class="eng" use:fit={23}>ENG</span>
      <div class="clock"><span use:fit={27}>11:27</span><span use:fit={58}>10-10-2023</span></div>
      <div class="nt"><svg width="26" height="25" viewBox="0 0 26 25">{@html I.notif}<text x="13.300" y="20.500" fill="#fff" font-size="12" font-weight="600">1</text></svg></div>
      <i class="peek"></i>
    </div>
  </footer>
</div>

<style>
  :global(body) { margin: 0; overflow: hidden; }
  .desktop { width: 1366px; height: 768px; display: flex; flex-direction: column; overflow: hidden; font: 13px/16px "Roboto", "Liberation Sans", sans-serif; color: #333;
    background: linear-gradient(90deg, #ececec 0, #e6e6e6 7px, #e4e4e4 140px, #54c0d0 165px, #159cc8 350px, #2ab6d8 590px, #8cc8c8 620px, #9bd0cc 725px, #3a7a7a 735px, #a5cfca 755px, #28a8c8 800px, #45c0d8 1080px, #50c4cc 1195px, #ddd 1225px, #e8e8e8 1366px); }
  .desktop span { white-space: nowrap; }
  svg { display: block; flex: none; }
  .seg { font-family: "Open Sans", "Noto Sans", sans-serif; }
  .window { box-sizing: border-box; width: 1351px; height: 721px; margin: 0 0 7px 7px; border: 1px solid #5a5d61; box-shadow: 2px 1px 5px rgba(0,0,0,.3); display: flex; flex-direction: column; background: #f2f2f2; flex: none; }
  .tabstrip { height: 42px; background: #dee1e6; display: flex; flex: none; }
  .tab { width: 240px; height: 34px; margin: 8px 0 0 8px; background: #fff; border-radius: 8px 8px 0 0; display: flex; align-items: center; box-sizing: border-box; padding-left: 12px; }
  .tabname { font-size: 12px; margin-left: 9px; color: #3c4043; flex: none; }
  .tabx { margin-left: auto; margin-right: 11px; }
  .plus { margin: 19px 0 0 16px; }
  .winbtns { margin: 8px 15px 0 auto; }
  .nav { display: flex; align-items: center; background: #fff; padding: 2px 0 0 15px; flex: none; height: 39px; box-sizing: border-box; }
  .nf { margin-left: 18px; }
  .nr { margin-left: 18px; }
  .omni { width: 1134px; height: 34px; border-radius: 17px; background: #f1f3f4; margin: 0 0 0 14px; display: flex; align-items: center; box-sizing: border-box; padding-left: 14px; flex: none; }
  .url { font-size: 13.500px; margin-left: 11px; margin-top: -1px; }
  .url b { font-weight: 400; color: #202124; }
  .url i { font-style: normal; color: #5f6368; }
  .gbub { width: 16px; height: 16px; border-radius: 50%; background: #fff; display: flex; align-items: center; justify-content: center; margin-left: auto; }
  .osh { margin-left: 17px; }
  .ost { margin: 0 11px 0 17px; }
  .npan { margin-left: 15px; }
  .avatar { width: 22px; height: 22px; border-radius: 50%; background: #5c6bc0; color: #fff; font-size: 12px; line-height: 20px; text-align: center; margin-left: 14px; }
  .nkeb { margin-left: 20px; }
  .bookmarks { height: 36px; box-sizing: border-box; display: flex; align-items: center; background: #fff; padding: 0 0 1px 16px; border-bottom: 1px solid #d3d9da; font-size: 12px; color: #3c4043; flex: none; }
  .bm1 { margin-left: 10px; }
  .by { margin-left: 16px; }
  .bm2 { margin-left: 9px; }
  .bmap { margin-left: 17px; }
  .bm3 { margin-left: 8px; }
  header { height: 60px; background: #232738; color: #eee; display: flex; position: relative; flex: none; }
  nav { display: flex; gap: 20px; padding: 33px 0 0 10px; font-size: 13.500px; width: 552px; height: 20px; }
  h1 { margin: 21px 0 0 0; font: 700 16px/20px "Roboto", sans-serif; width: 480px; }
  .publish { display: flex; gap: 1px; margin-top: 18px; }
  button { height: 24px; width: 119px; border: 0; background: #1a6aa3; color: #fff; border-radius: 2px 0 0 2px; font: 700 13px "Roboto", sans-serif; padding: 0; }
  .drop { width: 24px; display: flex; align-items: center; justify-content: center; border-radius: 0 2px 2px 0; }
  .user { height: 40px; margin: 10px 0 0 16px; border: solid #0b0d16; border-width: 0 1px; display: flex; align-items: center; font-size: 14px; gap: 3px; padding-left: 10px; box-sizing: border-box; width: 97px; }
  .hx { margin: 23px 0 0 20px; }
  .bubble { position: absolute; left: 976px; top: 56px; background: #fafafa; border: 1px solid #d0d0d0; color: #333; font-size: 13px; line-height: 38px; padding-left: 12px; box-sizing: border-box; width: 252px; height: 43px; z-index: 2; }
  .tipup { position: absolute; left: 115px; top: -10px; }
  .bx { position: absolute; right: 5px; top: 5px; }
  .toolbar { height: 40px; background: #f4f4f4; display: flex; align-items: center; flex: none; }
  .tool { flex: none; margin-top: 1px; }
  .sep { width: 1px; height: 36px; background: #d0d0d0; margin-top: 2px; flex: none; }
  .on { height: 30px; background: #e4e4e4; display: flex; align-items: center; justify-content: center; flex: none; margin-top: 1px; }
  .showme { margin-left: auto; margin-right: 23px; display: flex; align-items: center; gap: 9px; font-size: 13px; margin-top: 1px; }
  .main { display: flex; height: 454px; flex: none; }
  aside { width: 199px; border: solid #d0d0d0; border-width: 1px 1px 1px 0; background: #fff; height: 452px; flex: none; display: flex; flex-direction: column; }
  .ptabs { display: flex; height: 27px; flex: none; font-size: 14px; }
  .pt { width: 79px; display: flex; align-items: center; padding-left: 12px; box-sizing: border-box; color: #222; }
  .an { width: 120px; background: #fafafa; border: solid #d0d0d0; border-width: 0 0 1px 1px; justify-content: space-between; padding-right: 7px; color: #333; }
  .ds { border-bottom: 1px solid #d0d0d0; display: flex; align-items: center; gap: 6px; padding: 0 0 3px 5px; box-sizing: border-box; height: 33px; flex: none; }
  .find { display: flex; height: 24px; margin: 12px 0 0 6px; align-items: center; flex: none; }
  .sbox { width: 130px; height: 24px; border: 1px solid #c4c4c4; box-sizing: border-box; display: flex; align-items: center; gap: 9px; padding-left: 5px; color: #666; margin-right: 6px; }
  .find > i { width: 1px; height: 22px; background: #c8c8c8; margin: 0 11px 0 8px; }
  .tables { padding: 12px 0 0 18px; font-weight: 500; color: #222; flex: none; height: 11px; }
  .fields { display: flex; overflow: hidden; height: 333px; flex: none; }
  .list { flex: 1; height: 333px; overflow: hidden; padding-top: 9px; box-sizing: border-box; }
  .field { height: 21px; display: flex; align-items: center; }
  .fi { width: 51px; box-sizing: border-box; padding-left: 22px; flex: none; height: 11px; }
  .abc { font: 10px/11px "Roboto", sans-serif; color: #4996b2; display: inline-block; vertical-align: top; margin-left: -1px; }
  .it { font-style: italic; }
  .ind .fi { width: 54px; }
  hr { border: 0; border-top: 1px solid #c8c8c8; margin: 1px 6px 0 18px; }
  .scroll { width: 9px; height: 315px; background: #f3f3f3; }
  .thumb { height: 106px; background: #dcdcdc; }
  .shelves { width: 178px; margin-left: 6px; display: flex; flex-direction: column; gap: 6px; flex: none; }
  .card { background: #fafafa; border: 1px solid #d4d4d4; box-sizing: border-box; flex: none; }
  .sm { height: 46px; }
  .marks { height: 259px; }
  h2 { margin: 0; padding: 5px 0 0 8px; font: 13px/16px "Roboto", sans-serif; display: flex; align-items: center; gap: 5px; }
  .select { margin: 8px 6px 0; height: 24px; border: 1px solid #b4b4b4; box-sizing: border-box; display: flex; align-items: center; color: #666; }
  .select i { width: 12px; height: 12px; border: 1px solid #555; box-sizing: border-box; margin: 0 7px 0 6px; }
  .select b { margin-left: auto; border-left: 1px solid #d4d4d4; width: 17px; height: 22px; display: flex; align-items: center; justify-content: center; }
  .mgrid { display: grid; grid-template-columns: 50px 50px 50px; gap: 6px 7px; margin: 5px 0 0 6px; }
  .mbtn { height: 50px; border: 1px solid #d0d0d0; box-sizing: border-box; display: flex; flex-direction: column; align-items: center; padding-top: 9px; gap: 3px; font-size: 12px; }
  .pills { margin: 12px 0 0 9px; display: flex; flex-direction: column; gap: 3px; }
  .prow { display: flex; align-items: center; gap: 7px; padding-left: 1px; }
  .pill { width: 138px; height: 20px; border-radius: 10px; color: #fff; padding-left: 11px; box-sizing: border-box; line-height: 21px; }
  .canvas { margin-left: 6px; width: 954px; display: flex; flex-direction: column; gap: 6px; flex: none; }
  .shelf { height: 28px; border: 1px solid #d4d4d4; box-sizing: border-box; background: #fafafa; display: flex; }
  .sh { width: 78px; border-right: 1px solid #d4d4d4; display: flex; align-items: center; gap: 5px; padding-left: 6px; }
  .vrow { display: flex; gap: 6px; }
  .view { width: 786px; height: 380px; background: #fff; border: 1px solid #d4d4d4; box-sizing: border-box; }
  .vtitle { height: 51px; text-align: center; font: 300 20px/48px "Open Sans", "Noto Sans", sans-serif; color: #111; }
  .tree { margin-left: 8px; }
  text { font-family: "Open Sans", "Noto Sans", sans-serif; font-size: 12px; }
  .lt { fill: #fff; font-weight: 500; }
  .dk { fill: #000; font-weight: 300; font-size: 12.500px; }
  .side { width: 162px; display: flex; flex-direction: column; gap: 6px; }
  .blank { height: 14px; border: 1px solid #d4d4d4; background: #fff; box-sizing: border-box; }
  .legend { height: 68px; border: 1px solid #d4d4d4; background: #fff; box-sizing: border-box; padding: 3px 7px 0 3px; font: 13px/16px "Open Sans", "Noto Sans", sans-serif; }
  .ramp { margin: 8px 0 0 4px; height: 16px; border: 1px solid #b0a898; box-sizing: border-box; background: linear-gradient(90deg, #b9e4d9, #8cc8cd 25%, #3f9cb8 50%, #358bae 70%, #2c5985); }
  .range { display: flex; justify-content: space-between; margin: 1px 0 0 4px; font-weight: 300; color: #111; }
  .sheets { height: 31px; background: #e4e4e4; border: solid #c8c8c8; border-width: 1px 0; box-sizing: border-box; display: flex; flex: none; color: #666; }
  .st { border-right: 1px solid #c8c8c8; display: flex; align-items: center; justify-content: center; gap: 6px; padding-bottom: 3px; height: 26px; flex: none; }
  .src { box-sizing: border-box; width: 126px !important; height: 29px; justify-content: flex-start; padding-left: 10px; }
  .cur { background: #fafafa; color: #111; font-weight: 500; }
  .add { width: 31px; }
  .status { flex: 1; background: #eaeaea; display: flex; align-items: center; gap: 11px; padding-left: 10px; font-size: 11px; }
  footer { height: 40px; display: flex; flex: none; color: #fff; background: linear-gradient(90deg, #353535 0, #353535 48px, #092a31 392px, #102c32 500px, #1c2f30 620px, #222c2b 700px, #142d34 850px, #0c3038 1000px, #15343a 1060px, #2a3333 1180px, #353535 1260px); }
  .start { width: 48px; display: flex; align-items: center; justify-content: center; }
  .cortana { width: 344px; background: #f1f1f1; border-top: 1px solid #c4c4c4; box-sizing: border-box; color: #333; display: flex; align-items: center; font-size: 14.500px; padding: 0 15px 0 9px; }
  .cortana span:nth-child(2) { margin: 0 auto 0 9px; }
  .ring { width: 22px; height: 22px; border: 3px solid #111; border-radius: 50%; box-sizing: border-box; }
  .app { width: 49px; display: flex; align-items: center; justify-content: center; flex: none; box-sizing: border-box; }
  .app:nth-child(4) { margin-left: 1px; }
  .front { background: #4a5557; border-bottom: 2px solid #a9e5f7; padding-top: 2px; width: 48px; margin-left: 1px; }
  .open { background: linear-gradient(#a9e5f7, #a9e5f7) 5px 100% / 40px 2px no-repeat; }
  .tray { display: flex; align-items: center; margin-left: 246px; flex: none; }
  .t1 { margin-left: 22px; }
  .t2 { margin-left: 12px; }
  .t3 { margin-left: 10px; }
  .t4 { margin-left: 8px; }
  .eng { font-size: 12px; margin-left: 9px; }
  .clock { width: 58px; margin-left: 13px; font-size: 12px; line-height: 18px; display: flex; flex-direction: column; align-items: center; }
  .nt { margin: 7px 0 0 18px; }
  .peek { width: 1px; height: 40px; background: #777; margin-left: 10px; }
</style>
